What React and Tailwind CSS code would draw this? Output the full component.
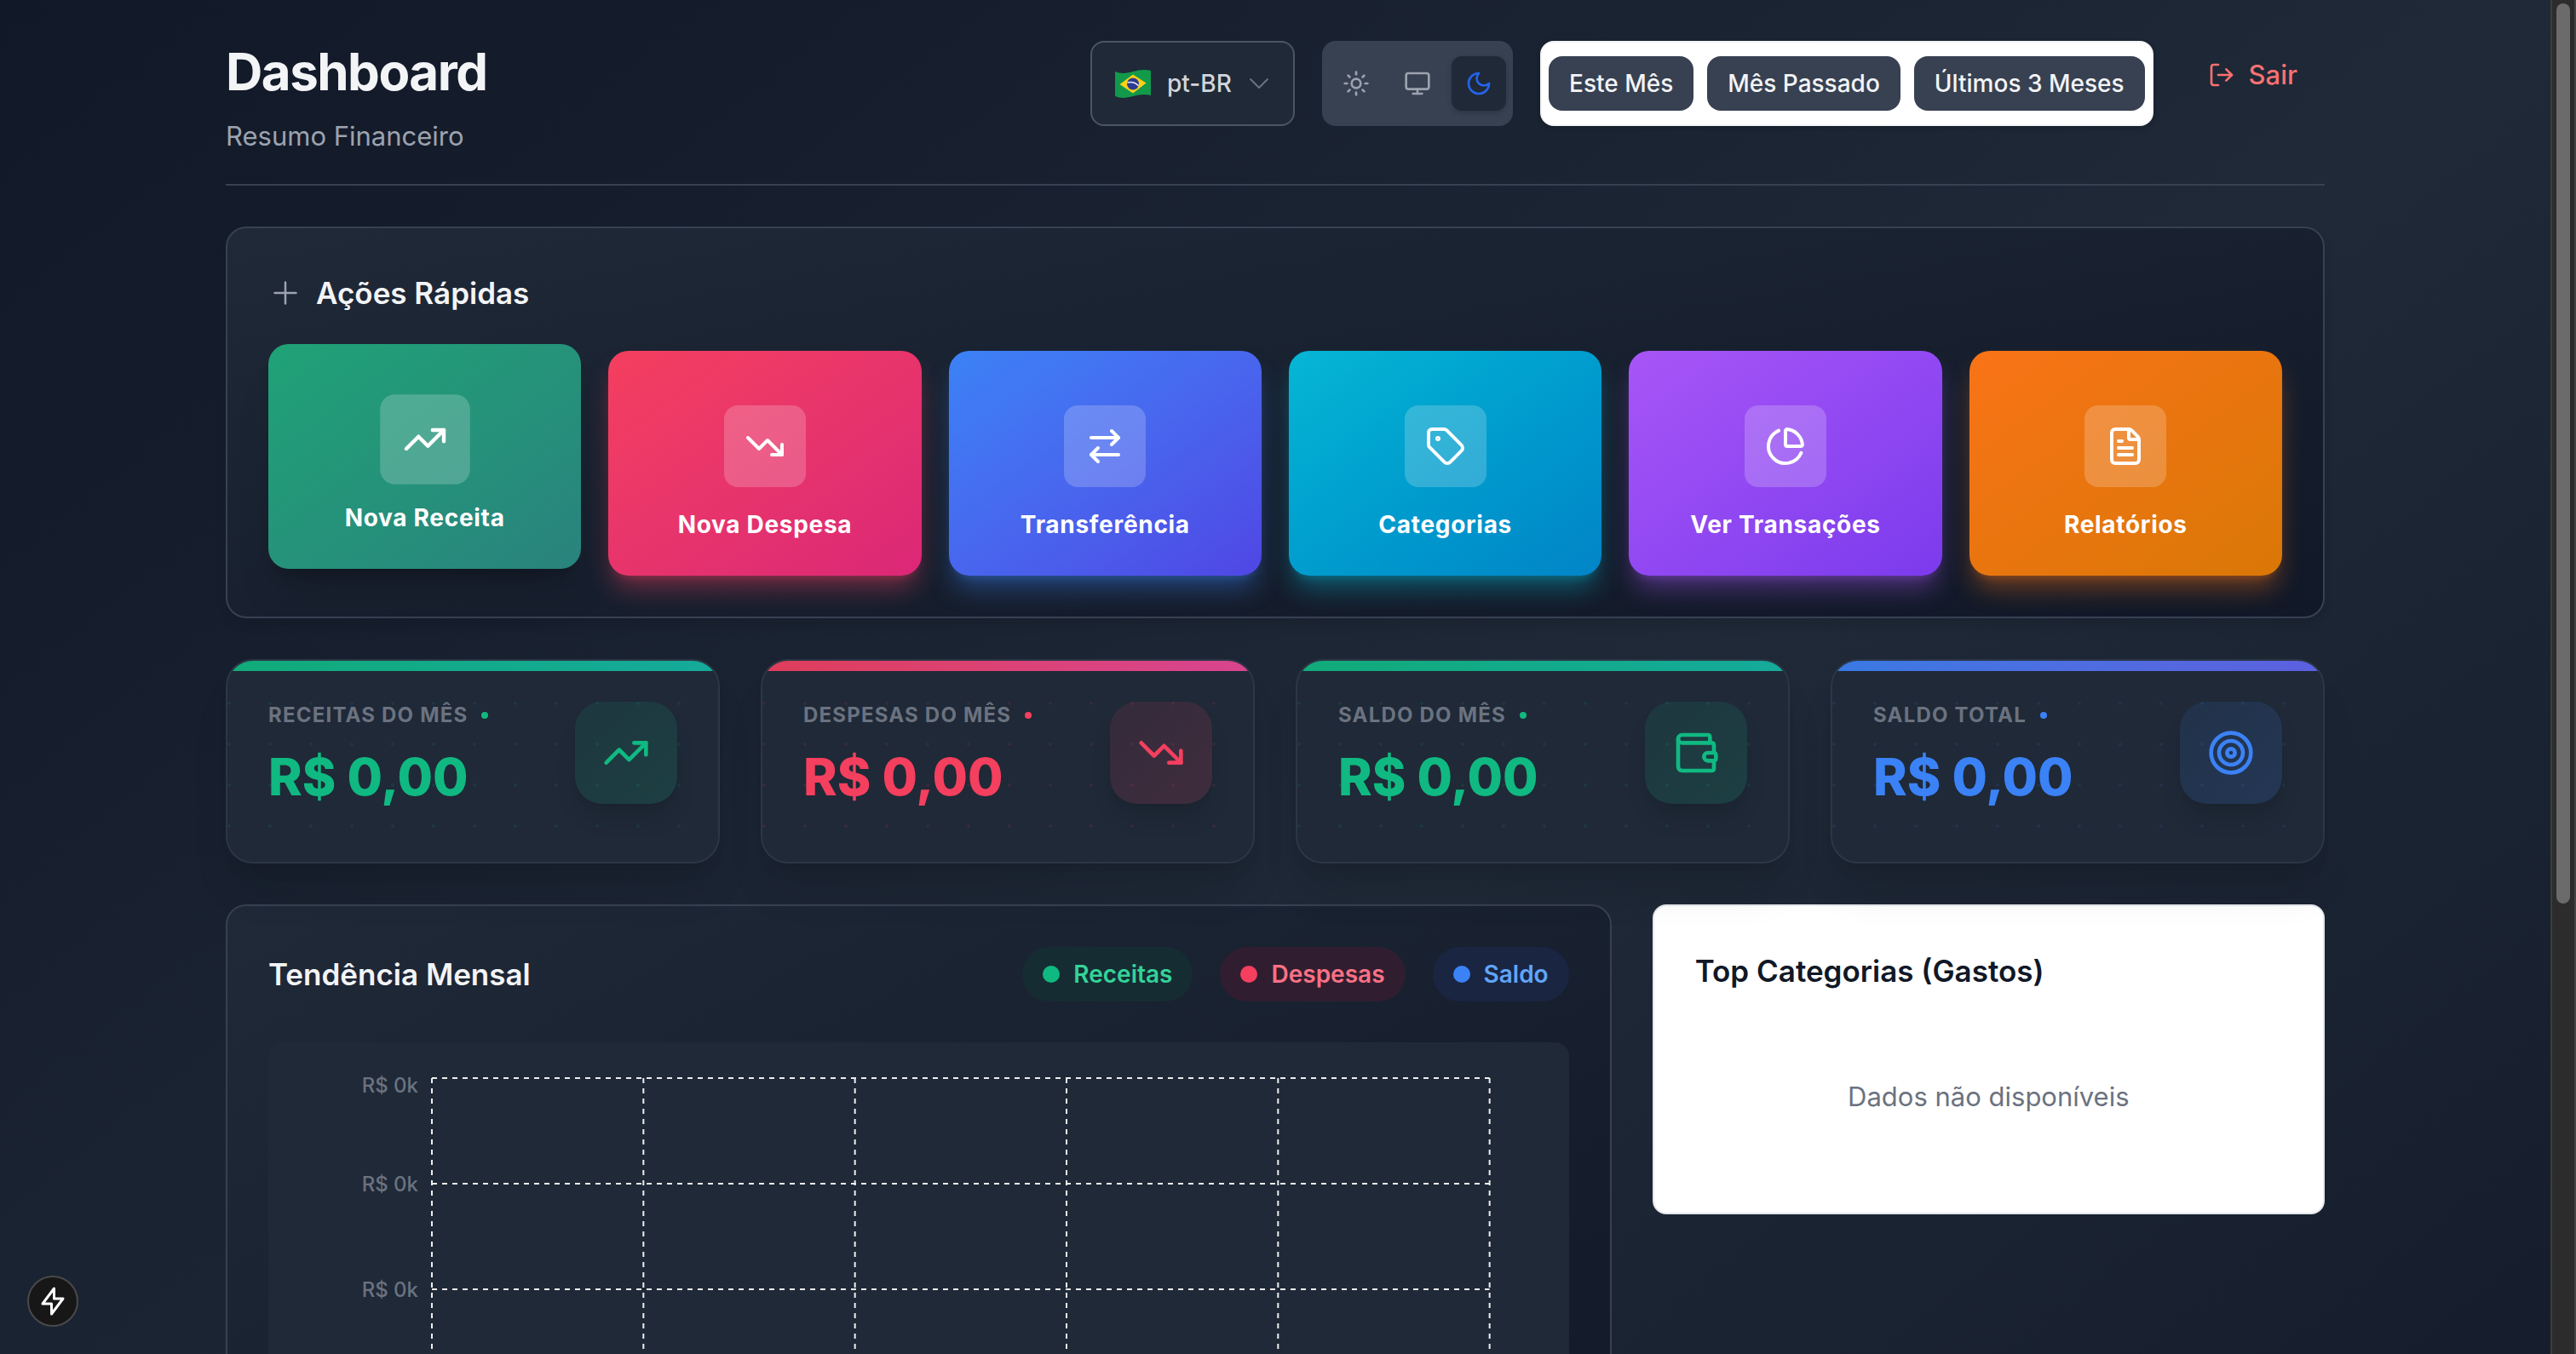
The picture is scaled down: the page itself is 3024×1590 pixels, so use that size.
import React from "react";
import {
  ArrowRightLeft,
  ChartPie,
  FileText,
  LogOut,
  Monitor,
  Sun,
  Tag,
  Target,
  TrendingDown,
  TrendingUp,
  Wallet,
} from "lucide-react";

function BrazilFlag() {
  return (
    <svg viewBox="0 0 48 36" className="h-9 w-12 shrink-0" aria-hidden="true">
      <path d="M3 4c7 3 14 2 21 0s14-3 21-1v29c-7-2-14-1-21 1s-14 3-21 0z" fill="#12994a" />
      <path d="M24 7.500 39.500 17.500 24 29.500 8.500 19z" fill="#fbd116" />
      <circle cx="24" cy="18.500" r="7" fill="#2d3b94" />
      <path d="M17.300 17c5-1.200 9.600 0 13.200 3.600" fill="none" stroke="#e8edf5" strokeWidth="1.600" />
    </svg>
  );
}

function ChevronIcon() {
  return (
    <svg viewBox="0 0 24 24" className="size-8 shrink-0 text-[#6b7280]" fill="none" stroke="currentColor" strokeWidth="1.5" strokeLinecap="round" strokeLinejoin="round" aria-hidden="true">
      <path d="m19.5 8.250-7.500 7.500-7.500-7.500" />
    </svg>
  );
}

function PlusIcon() {
  return (
    <svg viewBox="0 0 24 24" className="size-10 text-[#9ca3af]" fill="none" stroke="currentColor" strokeWidth="1.5" strokeLinecap="round" aria-hidden="true">
      <path d="M12 4.500v15m7.500-7.500h-15" />
    </svg>
  );
}

function MoonIcon({ className }) {
  return (
    <svg viewBox="0 0 24 24" className={className} fill="none" stroke="currentColor" strokeWidth="2" strokeLinecap="round" strokeLinejoin="round" aria-hidden="true">
      <path d="M12 3a6 6 0 0 0 9 9 9 9 0 1 1-9-9Z" />
    </svg>
  );
}

const themes = [
  { label: "Tema claro", Icon: Sun, style: "text-[#9ca3af]" },
  { label: "Tema do sistema", Icon: Monitor, style: "text-[#9ca3af]" },
  { label: "Tema escuro", Icon: MoonIcon, style: "bg-[#1f2937] text-[#2563eb] shadow-[0_2px_6px_rgba(0,0,0,0.2)]" },
];

const periods = ["Este Mês", "Mês Passado", "Últimos 3 Meses"];

function Header() {
  return (
    <header className="flex items-start justify-between border-b-2 border-[#374151] pb-8">
      <div>
        <h1 className="text-[60px] leading-[72px] font-bold tracking-tight text-[#f3f4f6]">Dashboard</h1>
        <p className="mt-4 text-[31px] leading-12 text-[#9ca3af]">Resumo Financeiro</p>
      </div>
      <div className="flex items-start gap-8">
        <label className="flex h-25 items-center gap-4 rounded-2xl border-2 border-[#4b5563] bg-[#1f2937] px-6 text-[28px] font-medium text-[#d1d5db]">
          <BrazilFlag />
          <select aria-label="Idioma" className="appearance-none bg-transparent outline-none">
            <option>pt-BR</option>
          </select>
          <ChevronIcon />
        </label>
        <div className="flex h-25 items-center gap-2 rounded-2xl bg-[#374151] px-2">
          {themes.map(({ label, Icon, style }) => (
            <button key={label} type="button" aria-label={label} className={`flex size-16 items-center justify-center rounded-xl ${style}`}>
              <Icon className="size-8" />
            </button>
          ))}
        </div>
        <div className="flex h-25 items-center gap-4 rounded-2xl border-2 border-[#f3f4f6] bg-white px-2 shadow-[0_2px_6px_rgba(0,0,0,0.2)]">
          {periods.map((p) => (
            <button key={p} type="button" className="h-16 rounded-2xl bg-[#374151] px-6 text-[28px] leading-10 font-medium whitespace-nowrap text-[#f3f4f6]">
              {p}
            </button>
          ))}
        </div>
        <button type="button" className="flex h-20 items-center gap-4 px-8 text-[31px] leading-12 font-medium text-[#f87171]">
          <LogOut className="size-8" />
          Sair
        </button>
      </div>
    </header>
  );
}

const actions = [
  {
    label: "Nova Receita",
    Icon: TrendingUp,
    active: true,
    style: "-translate-y-2 from-[#1fa276] to-[#29837d] shadow-[0_40px_50px_-10px_rgba(0,0,0,0.1),0_16px_20px_-12px_rgba(0,0,0,0.3)]",
  },
  {
    label: "Nova Despesa",
    Icon: TrendingDown,
    style: "from-[#f43f5e] to-[#db2777] shadow-[0_20px_30px_-6px_#f43f5e66,0_8px_12px_-8px_#f43f5e66]",
  },
  {
    label: "Transferência",
    Icon: ArrowRightLeft,
    style: "from-[#3b82f6] to-[#4f46e5] shadow-[0_20px_30px_-6px_#3b82f666,0_8px_12px_-8px_#3b82f666]",
  },
  {
    label: "Categorias",
    Icon: Tag,
    style: "from-[#06b6d4] to-[#0284c7] shadow-[0_20px_30px_-6px_#06b6d466,0_8px_12px_-8px_#06b6d466]",
  },
  {
    label: "Ver Transações",
    Icon: ChartPie,
    style: "from-[#a855f7] to-[#7c3aed] shadow-[0_20px_30px_-6px_#a855f766,0_8px_12px_-8px_#a855f766]",
  },
  {
    label: "Relatórios",
    Icon: FileText,
    style: "from-[#f97316] to-[#d97706] shadow-[0_20px_30px_-6px_#f9731666,0_8px_12px_-8px_#f9731666]",
  },
];

function QuickActions() {
  return (
    <section className="rounded-3xl border-2 border-[#374151] bg-linear-to-br from-[#1f2937] to-[#111827] p-12 shadow-[0_8px_12px_rgba(0,0,0,0.1)]">
      <h2 className="flex items-center gap-4 text-[35px] leading-14 font-semibold text-[#f3f4f6]">
        <PlusIcon />
        Ações Rápidas
      </h2>
      <div className="mt-10 grid grid-cols-6 gap-8">
        {actions.map(({ label, Icon, active, style }) => (
          <button key={label} type="button" className={`flex flex-col items-center gap-6 rounded-3xl bg-linear-to-br pt-16 pb-10 text-white ${style}`}>
            <span className={`flex size-24 items-center justify-center rounded-2xl bg-white/20 ${active ? "scale-110" : ""}`}>
              <Icon className="size-12" />
            </span>
            <span className="text-[28px] leading-10 font-bold tracking-wide">{label}</span>
          </button>
        ))}
      </div>
    </section>
  );
}

const stats = [
  {
    label: "Receitas do mês",
    Icon: TrendingUp,
    bar: "from-[#10b981] to-[#14b8a6]",
    text: "text-[#10b981]",
    dot: "bg-[#10b981]",
    box: "from-[#10b981]/10 to-[#10b981]/15",
    pattern: "bg-[radial-gradient(circle_at_2px_2px,#10b981_2px,transparent_2px)]",
  },
  {
    label: "Despesas do mês",
    Icon: TrendingDown,
    bar: "from-[#f43f5e] to-[#ec4899]",
    text: "text-[#f43f5e]",
    dot: "bg-[#f43f5e]",
    box: "from-[#f43f5e]/10 to-[#f43f5e]/15",
    pattern: "bg-[radial-gradient(circle_at_2px_2px,#f43f5e_2px,transparent_2px)]",
  },
  {
    label: "Saldo do mês",
    Icon: Wallet,
    bar: "from-[#10b981] to-[#14b8a6]",
    text: "text-[#10b981]",
    dot: "bg-[#10b981]",
    box: "from-[#10b981]/10 to-[#10b981]/15",
    pattern: "bg-[radial-gradient(circle_at_2px_2px,#10b981_2px,transparent_2px)]",
  },
  {
    label: "Saldo total",
    Icon: Target,
    bar: "from-[#3b82f6] to-[#6366f1]",
    text: "text-[#3b82f6]",
    dot: "bg-[#3b82f6]",
    box: "from-[#3b82f6]/10 to-[#3b82f6]/15",
    pattern: "bg-[radial-gradient(circle_at_2px_2px,#3b82f6_2px,transparent_2px)]",
  },
];

function StatCard({ label, Icon, bar, text, dot, box, pattern }) {
  return (
    <article className="relative overflow-hidden rounded-4xl border-2 border-[#2c3645] bg-[#1f2937] shadow-[0_40px_50px_-10px_rgba(0,0,0,0.1),0_16px_20px_-12px_rgba(0,0,0,0.1)]">
      <div className={`absolute inset-0 bg-size-[48px_48px] opacity-10 ${pattern}`} />
      <div className={`absolute inset-x-0 top-0 h-3 bg-linear-to-r opacity-90 ${bar}`} />
      <div className="relative flex items-start justify-between px-12 pt-12 pb-[60px]">
        <div>
          <h3 className="flex items-center gap-4 text-[24px] leading-8 font-bold tracking-wider text-[#6b7280] uppercase">
            {label}
            <span className={`size-2 rounded-full ${dot}`} />
          </h3>
          <p className={`mt-4 text-[60px] leading-20 font-extrabold ${text}`}>R$ 0,00</p>
        </div>
        <div className={`flex size-30 items-center justify-center rounded-4xl bg-linear-to-br shadow-[0_20px_30px_-6px_rgba(0,0,0,0.1),0_8px_12px_-8px_rgba(0,0,0,0.1)] ${box}`}>
          <Icon className={`size-14 ${text}`} />
        </div>
      </div>
    </article>
  );
}

const legend = [
  { label: "Receitas", dot: "bg-[#10b981]", style: "bg-[#162c33] text-[#34d399]" },
  { label: "Despesas", dot: "bg-[#f43f5e]", style: "bg-[#301e30] text-[#fb7185]" },
  { label: "Saldo", dot: "bg-[#3b82f6]", style: "bg-[#1a2542] text-[#60a5fa]" },
];

const columns = ["0%", "20%", "40%", "60%", "80%", "100%"];
const gridRows = [42, 166, 290, 414, 538];
const ticks = [50, 166, 290];

function TrendChart() {
  return (
    <section className="col-span-2 rounded-3xl border-2 border-[#374151] bg-linear-to-br from-[#1f2937] to-[#111827] p-12">
      <div className="flex items-center justify-between">
        <h2 className="text-[35px] leading-14 font-semibold text-[#f3f4f6]">Tendência Mensal</h2>
        <ul className="flex gap-8">
          {legend.map(({ label, dot, style }) => (
            <li key={label} className={`flex h-16 items-center gap-4 rounded-full px-6 text-[28px] leading-10 font-semibold ${style}`}>
              <span className={`size-5 rounded-full ${dot}`} />
              {label}
            </li>
          ))}
        </ul>
      </div>
      <div className="mt-12 flex rounded-2xl bg-[#1f2937] pr-[93px]">
        <svg className="h-[640px] w-48 shrink-0" role="img" aria-label="Eixo de valores">
          {ticks.map((y) => (
            <text key={y} x="176" y={y + 9} textAnchor="end" fontSize="24" fontWeight="500" fill="#6b7280">
              R$ 0k
            </text>
          ))}
        </svg>
        <svg className="h-[640px] min-w-0 flex-1 overflow-visible" role="img" aria-label="Grade do gráfico">
          <g stroke="#eeeeee" strokeWidth="2" strokeDasharray="6 6">
            {gridRows.map((y) => (
              <line key={y} x1="0%" x2="100%" y1={y} y2={y} />
            ))}
            {columns.map((x) => (
              <line key={x} x1={x} x2={x} y1="42" y2="538" />
            ))}
          </g>
        </svg>
      </div>
    </section>
  );
}

function TopCategories() {
  return (
    <section className="rounded-2xl border-2 border-[#e5e7eb] bg-white p-12">
      <h2 className="text-[35px] leading-14 font-semibold text-[#111827]">Top Categorias (Gastos)</h2>
      <p className="mt-8 py-16 text-center text-[31px] leading-12 text-[#6b7280]">Dados não disponíveis</p>
    </section>
  );
}

function Scrollbar() {
  return (
    <div className="flex w-[30px] shrink-0 justify-center border-r-2 border-l-2 border-r-[#444444] border-l-[#3d3d3d] bg-[#2c2c2c] pt-1" aria-hidden="true">
      <div className="h-[66.500vh] w-4 rounded-full bg-[#6b6b6b]" />
    </div>
  );
}

export default function App() {
  return (
    <div className="flex h-screen overflow-hidden bg-[#111827] font-['Inter','Liberation_Sans',sans-serif]">
      <div className="h-[150vh] min-w-0 flex-1 bg-linear-to-br from-[#111827] via-[#1f2937] to-[#111827]">
        <main className="mx-auto flex max-w-[2560px] flex-col gap-12 px-12 pt-12">
          <Header />
          <QuickActions />
          <div className="grid grid-cols-4 gap-12">
            {stats.map((s) => (
              <StatCard key={s.label} {...s} />
            ))}
          </div>
          <div className="grid grid-cols-3 items-start gap-12">
            <TrendChart />
            <TopCategories />
          </div>
        </main>
      </div>
      <Scrollbar />
      <button type="button" aria-label="Ferramentas" className="fixed bottom-8 left-8 flex size-[60px] items-center justify-center rounded-full border-2 border-[#4a4a4a] bg-[#171717] text-white">
        <svg viewBox="0 0 24 24" className="size-9" fill="none" stroke="currentColor" strokeWidth="2" strokeLinejoin="round" aria-hidden="true">
          <path d="M13 2 4 14h7v8l9-12h-7z" />
        </svg>
      </button>
    </div>
  );
}
